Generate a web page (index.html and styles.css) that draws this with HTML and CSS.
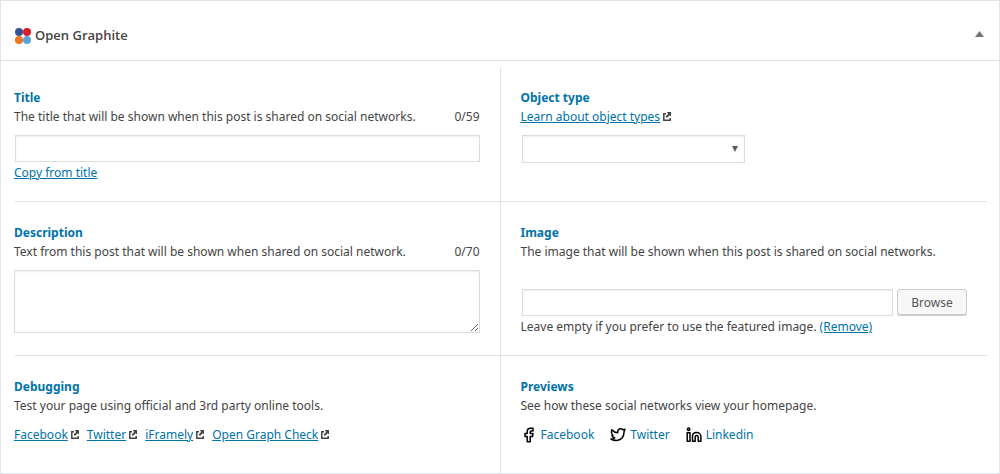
FILE: index.html
```html
<!DOCTYPE html>
<html lang="en">
<head>
<meta charset="utf-8">
<meta name="viewport" content="width=device-width, initial-scale=1">
<title>Open Graphite</title>
<link rel="stylesheet" href="styles.css">
</head>
<body>
<svg class="sprite" aria-hidden="true">
  <symbol id="external" viewBox="0 0 8 9">
    <path d="M3 1.7H.8V8.2H7.2V6" fill="none" stroke="#444" stroke-width="1.5"/>
    <path d="M3.8 0H8v4.6L6.6 3.3 4 6 2.6 4.6 5.2 1.9z" fill="#444"/>
  </symbol>
</svg>
<section class="panel">
  <header class="panel-header">
    <svg class="logo" viewBox="0 0 16 16" aria-hidden="true">
      <circle cx="4" cy="4" r="4" fill="#36528f"/>
      <circle cx="12" cy="4" r="4" fill="#dd1c2b"/>
      <circle cx="4" cy="12" r="4" fill="#ee7623"/>
      <circle cx="12" cy="12" r="4" fill="#5aa4d8"/>
    </svg>
    <h2 class="panel-title">Open Graphite</h2>
    <button class="toggle" type="button" aria-label="Toggle panel">
      <svg class="toggle-icon" viewBox="0 0 9 6" aria-hidden="true"><path d="M4.5 0 9 6H0z" fill="#72777c"/></svg>
    </button>
  </header>
  <div class="grid">
    <div class="cell">
      <label class="heading" for="title">Title</label>
      <div class="hint"><span>The title that will be shown when this post is shared on social networks.</span><span>0/59</span></div>
      <div class="control"><input class="field" id="title" type="text"></div>
      <div><a class="link" href="#title">Copy from title</a></div>
    </div>
    <div class="cell">
      <label class="heading" for="type">Object type</label>
      <div class="with-icon"><a class="link" href="#type">Learn about object types</a><svg class="external"><use href="#external"/></svg></div>
      <div class="control select-wrap">
        <select class="field select" id="type"><option></option></select>
        <svg class="select-arrow" viewBox="0 0 6 6" aria-hidden="true"><path d="M0 0H6L3 6z" fill="#555d66"/></svg>
      </div>
    </div>
    <div class="cell">
      <label class="heading" for="description">Description</label>
      <div class="hint"><span>Text from this post that will be shown when shared on social network.</span><span>0/70</span></div>
      <textarea class="field area" id="description"></textarea>
    </div>
    <div class="cell">
      <label class="heading" for="image">Image</label>
      <div>The image that will be shown when this post is shared on social networks.</div>
      <div class="control image-control"><input class="field" id="image" type="text"><button class="browse" type="button">Browse</button></div>
      <div>Leave empty if you prefer to use the featured image. <a class="link" href="#image">(Remove)</a></div>
    </div>
    <div class="cell">
      <h3 class="heading">Debugging</h3>
      <div>Test your page using official and 3rd party online tools.</div>
      <div class="tools">
        <span class="with-icon"><a class="link" href="#facebook">Facebook</a><svg class="external"><use href="#external"/></svg></span>
        <span class="with-icon"><a class="link" href="#twitter">Twitter</a><svg class="external"><use href="#external"/></svg></span>
        <span class="with-icon"><a class="link" href="#iframely">iFramely</a><svg class="external"><use href="#external"/></svg></span>
        <span class="with-icon"><a class="link" href="#check">Open Graph Check</a><svg class="external"><use href="#external"/></svg></span>
      </div>
    </div>
    <div class="cell">
      <h3 class="heading">Previews</h3>
      <div>See how these social networks view your homepage.</div>
      <div class="previews">
        <a class="preview" href="#preview-facebook"><svg class="social" viewBox="0 0 16 16" aria-hidden="true"><path d="M6.2 14.7V9.5H4V6.6H6.2V4.4C6.2 2.2 7.5 1.2 9.4 1.2H12V4H10.2C9.5 4 9.2 4.3 9.2 5V6.6H12L11.5 9.5H9.2V14.7z"/></svg>Facebook</a>
        <a class="preview" href="#preview-twitter"><svg class="social" viewBox="0 0 16 16" aria-hidden="true"><path d="M1.8 2.8C3.4 4.8 5.3 5.7 7.8 5.8C7.3 3.2 9 1.8 10.7 1.8C11.7 1.8 12.4 2.2 13 2.8L15 2.3L14 4.8C14.2 10 11 13.5 6.5 13.5C4.4 13.5 2.6 13 1 12C2.7 12 3.9 11.7 4.8 11C3.2 10.6 2.3 9.8 2 8.5H3C1.7 7.3 1.1 5.2 1.8 2.8z"/></svg>Twitter</a>
        <a class="preview" href="#preview-linkedin"><svg class="social" viewBox="0 0 16 16" aria-hidden="true"><path d="M1.2 5.8H4V14.3H1.2zM6.5 14.3V9.5C6.5 7.4 8 5.6 10.6 5.6S14.9 7.4 14.9 9.5V14.3H12.2V9.8C12.2 8.9 11.7 8.4 10.7 8.4S9.2 8.9 9.2 9.8V14.3z"/><circle cx="2.6" cy="2.2" r="1.2"/></svg>Linkedin</a>
      </div>
    </div>
  </div>
</section>
</body>
</html>
```
FILE: styles.css
```css
* { box-sizing: border-box; }
body {
  margin: 0;
  background: #fff;
  color: #444;
  font: 12px/19px "Noto Sans", "Open Sans", sans-serif;
}
.sprite { display: none; }
.panel { border: 1px solid #e2e4e7; }
.panel-header {
  display: flex;
  align-items: center;
  gap: 4px;
  padding: 25px 15px 15px 14px;
  border-bottom: 1px solid #e2e4e7;
}
.logo { width: 16px; height: 16px; }
.panel-title { flex: 1; margin: 0; font: 600 13px/19px "Open Sans", "Noto Sans", sans-serif; }
.toggle { display: flex; padding: 0 0 3px; border: 0; background: none; }
.toggle-icon { width: 9px; height: 6px; }
.grid {
  display: grid;
  grid-template-columns: 1fr 1fr;
  padding: 6px 12px 0 13px;
}
.cell { padding: 21px 20px 19px 0; border-bottom: 1px solid #e2e4e7; }
.cell:nth-child(odd) { border-right: 1px solid #e2e4e7; }
.cell:nth-child(even) { padding-left: 20px; }
.cell:nth-last-child(-n+2) { padding-bottom: 29px; border-bottom: 0; }
.heading { display: block; margin: 0; color: #0073aa; font-size: 12px; line-height: 19px; font-weight: 700; }
.hint { display: flex; justify-content: space-between; }
.link { color: #0073aa; text-decoration: underline; }
.control { padding: 9px 0 1px 1px; }
.field {
  display: block;
  width: 100%;
  height: 27px;
  border: 1px solid #ddd;
  border-radius: 0;
  background: #fff;
  box-shadow: inset 0 1px 2px rgba(0, 0, 0, 0.07);
  color: #32373c;
  font: inherit;
}
.area { height: 63px; margin-top: 9px; }
.select-wrap { display: grid; width: 224px; padding-bottom: 0; }
.select { grid-area: 1 / 1; height: 28px; appearance: none; }
.select-arrow { grid-area: 1 / 1; place-self: center end; width: 6px; height: 6px; margin-right: 7px; pointer-events: none; }
.image-control { display: flex; gap: 4px; padding-top: 28px; }
.browse {
  flex: none;
  width: 70px;
  height: 26px;
  padding: 0;
  border: 1px solid #ccc;
  border-radius: 3px;
  background: #f7f7f7;
  box-shadow: 0 1px 0 #ccc;
  color: #555;
  font: inherit;
}
.with-icon { display: flex; align-items: center; gap: 3px; }
.external { width: 8px; height: 9px; }
.tools { display: flex; gap: 8px; padding-top: 10px; }
.previews { display: flex; gap: 16px; padding-top: 10px; }
.preview { display: flex; align-items: center; gap: 4px; color: #0073aa; text-decoration: none; }
.social { width: 16px; height: 16px; fill: none; stroke: #000; stroke-width: 1.5; stroke-linejoin: round; }
```
